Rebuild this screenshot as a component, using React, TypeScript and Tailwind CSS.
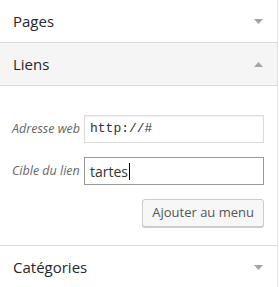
import React from "react";

const font = { fontFamily: '"Open Sans", "Noto Sans", sans-serif' };

function Tri({ up }: { up?: boolean }) {
  return (
    <svg width="9" height="5" viewBox="0 0 9 5" className="block">
      {up ? (
        <polygon points="0,5 9,5 4.5,0" fill="#a0a5aa" />
      ) : (
        <polygon points="0,0 9,0 4.5,5" fill="#a0a5aa" />
      )}
    </svg>
  );
}

function Header({ title, up, bg }: { title: string; up?: boolean; bg?: string }) {
  return (
    <div
      className={`flex h-[42px] items-center justify-between pl-[13px] pr-[14px] text-[15px] text-[#23282d] ${bg ?? "bg-white"}`}
    >
      <span className="leading-none">{title}</span>
      <Tri up={up} />
    </div>
  );
}

export default function App() {
  return (
    <div className="h-[287px] w-[279px] overflow-hidden bg-white" style={font}>
      <div className="w-[278px] border-r border-[#e5e5e5]">
        <div className="border-b border-[#dddddd]">
          <Header title="Pages" />
        </div>
        <div className="border-b border-[#dddddd]">
          <Header title="Liens" up bg="bg-[#f5f5f5]" />
        </div>
        <div className="flex flex-col gap-[14px] border-b border-[#dddddd] pb-[18px] pl-[12px] pr-[13px] pt-[29px]">
          <div className="flex items-center">
            <span className="w-[72px] whitespace-nowrap text-[12.5px] italic text-[#666]">Adresse web</span>
            <div className="flex h-[28px] flex-1 items-center border border-[#dddddd] bg-white px-[5px] text-[13px] text-[#333] shadow-[inset_0_1px_2px_rgba(0,0,0,0.07)]" style={{ fontFamily: '"Liberation Mono", monospace' }}>
              http://#
            </div>
          </div>
          <div className="flex items-center">
            <span className="w-[72px] whitespace-nowrap text-[12.5px] italic text-[#666]">Cible du lien</span>
            <div className="flex h-[28px] flex-1 items-center border border-[#999] bg-white px-[5px] text-[14px] text-[#333]">
              <span>tartes</span>
              <span className="ml-px inline-block h-[17px] w-px bg-black" />
            </div>
          </div>
          <div className="flex justify-end">
            <div className="flex h-[28px] items-center rounded-[3px] border border-[#cccccc] bg-[#f7f7f7] px-[9px] text-[13px] text-[#555] shadow-[0_1px_0_#cccccc]">
              Ajouter au menu
            </div>
          </div>
        </div>
        <Header title="Catégories" />
      </div>
    </div>
  );
}
